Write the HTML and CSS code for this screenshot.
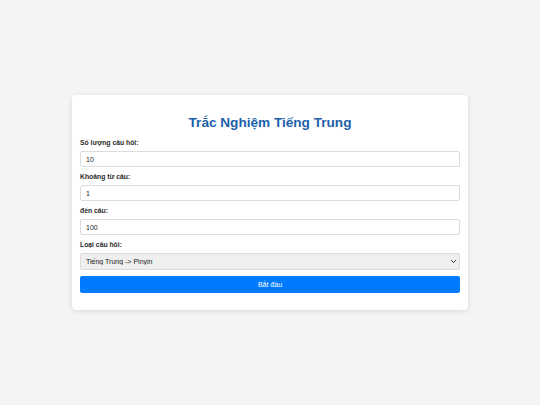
FILE: index.html
```html
<!DOCTYPE html>
<html lang="vi">
<head>
<meta charset="utf-8">
<title>Trắc Nghiệm Tiếng Trung</title>
<link rel="stylesheet" href="styles.css">
</head>
<body>
<div class="card">
  <h1 class="title">Trắc Nghiệm Tiếng Trung</h1>
  <form class="form">
    <label class="label" for="count">Số lượng câu hỏi:</label>
    <input class="field" id="count" type="number" value="10">
    <label class="label" for="from">Khoảng từ câu:</label>
    <input class="field" id="from" type="number" value="1">
    <label class="label" for="to">đến câu:</label>
    <input class="field" id="to" type="number" value="100">
    <label class="label" for="type">Loại câu hỏi:</label>
    <div class="select-wrap">
      <select class="field select" id="type">
        <option>Tiếng Trung -&gt; Pinyin</option>
      </select>
      <svg class="chevron" viewBox="0 0 10 6" width="5" height="3" aria-hidden="true"><path d="M1 1 L5 5 L9 1" fill="none" stroke="#222" stroke-width="2" stroke-linecap="round" stroke-linejoin="round"/></svg>
    </div>
    <button class="btn" type="button">Bắt đầu</button>
  </form>
</div>
</body>
</html>
```
FILE: styles.css
```css
html, body {
  margin: 0;
  height: 100%;
}
body {
  background: #f4f4f4;
  font-family: "Liberation Sans", Arial, sans-serif;
  display: flex;
  align-items: center;
  justify-content: center;
}
.card {
  width: 396px;
  box-sizing: border-box;
  background: #fff;
  border-radius: 4px;
  box-shadow: 0 1px 5px rgba(0,0,0,0.12);
  padding: 12px 8px 17px;
}
.title {
  margin: 8px 0 0;
  font-size: 13.6px;
  line-height: 15px;
  color: #1d5fa9;
  text-align: center;
  font-weight: bold;
}
.form {
  display: flex;
  flex-direction: column;
  margin-top: 9px;
}
.label {
  font-size: 6.8px;
  line-height: 8px;
  font-weight: bold;
  color: #2b2b2b;
  margin-bottom: 4px;
}
.field {
  box-sizing: border-box;
  width: 100%;
  height: 16px;
  margin: 0 0 6px;
  padding: 0 5px;
  border: 1px solid #dcdcdc;
  border-radius: 2px;
  font-family: inherit;
  font-size: 7px;
  color: #1a1a1a;
  background: #fff;
  outline: none;
}
.field::-webkit-inner-spin-button,
.field::-webkit-outer-spin-button {
  -webkit-appearance: none;
  margin: 0;
}
.select-wrap {
  position: relative;
}
.select {
  -webkit-appearance: none;
  appearance: none;
  display: block;
  height: 17px;
  background: #efefef;
  padding: 0 5px;
}
.chevron {
  position: absolute;
  right: 4px;
  top: 7px;
}
.btn {
  height: 17px;
  border: none;
  border-radius: 2px;
  background: #007bff;
  color: #fff;
  font-family: inherit;
  font-size: 7px;
  padding: 0;
}
```
